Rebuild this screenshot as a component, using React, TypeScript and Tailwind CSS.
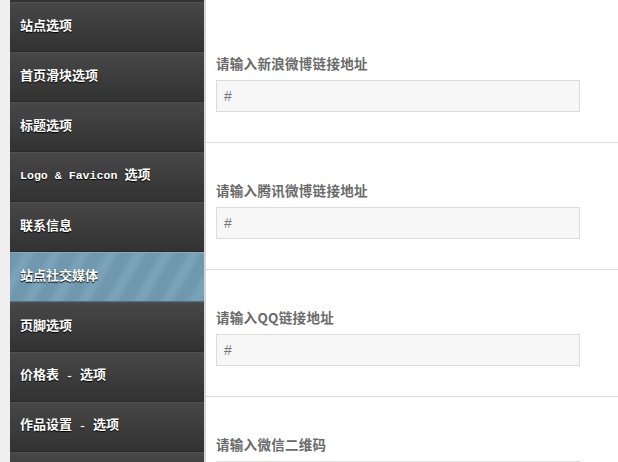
import React from "react";

const items: { label: React.ReactNode; active?: boolean }[] = [
  { label: "站点选项" },
  { label: "首页滑块选项" },
  { label: "标题选项" },
  {
    label: (
      <>
        <span className="font-['Liberation_Mono',monospace] text-[11.6px]">Logo &amp; Favicon </span>选项
      </>
    ),
  },
  { label: "联系信息" },
  { label: "站点社交媒体", active: true },
  { label: "页脚选项" },
  {
    label: (
      <>
        价格表<span className="font-['Liberation_Mono',monospace] text-[11.6px]"> - </span>选项
      </>
    ),
  },
  {
    label: (
      <>
        作品设置<span className="font-['Liberation_Mono',monospace] text-[11.6px]"> - </span>选项
      </>
    ),
  },
  { label: "" },
];

const fields = ["请输入新浪微博链接地址", "请输入腾讯微博链接地址", "请输入QQ链接地址", "请输入微信二维码"];

export default function App() {
  return (
    <div className="flex h-[462px] w-[618px] overflow-hidden bg-white">
      <div className="w-[10px] shrink-0 bg-[#efefef]" />
      <div className="flex w-[194px] shrink-0 flex-col bg-[#333333] pt-[2px]">
        {items.map((it, i) => (
          <div
            key={i}
            className={
              it.active
                ? "flex h-[50px] shrink-0 items-center border-t border-b border-t-[#86abc0] border-b-[#4f6f80] bg-[repeating-linear-gradient(120deg,#6f97ae_0px,#6f97ae_8px,#7aa2b8_14px,#7aa2b8_18px,#6f97ae_24px)] pb-[5px] pl-[10px]"
                : "flex h-[50px] shrink-0 items-center border-t border-b border-t-[#505050] border-b-[#2b2b2b] bg-[linear-gradient(to_bottom,#474747,#323232)] pb-[5px] pl-[10px]"
            }
          >
            <span className="font-['Noto_Sans_CJK_SC',sans-serif] text-[13px] font-bold leading-none text-white [text-shadow:0_1px_1px_#000]">
              {it.label}
            </span>
          </div>
        ))}
      </div>
      <div className="w-[2px] shrink-0 bg-[#d6d6d6]" />
      <div className="flex min-w-0 flex-1 flex-col pt-[16px]">
        {fields.map((f, i) => (
          <div key={i} className="shrink-0 border-b border-[#dddddd] pl-[10px] pt-[38px] pb-[30px]">
            <div className="h-[18px] font-['Noto_Sans_CJK_SC',sans-serif] text-[13.5px] font-bold leading-[18px] tracking-[0.3px] text-[#6a6a6a]">
              {f}
            </div>
            <div className="mt-[8px] flex h-[32px] w-[364px] items-center border border-[#dcdcdc] bg-[#f7f7f7] pl-[7px] font-['Liberation_Sans',sans-serif] text-[14px] text-[#777]">
              #
            </div>
          </div>
        ))}
      </div>
    </div>
  );
}
